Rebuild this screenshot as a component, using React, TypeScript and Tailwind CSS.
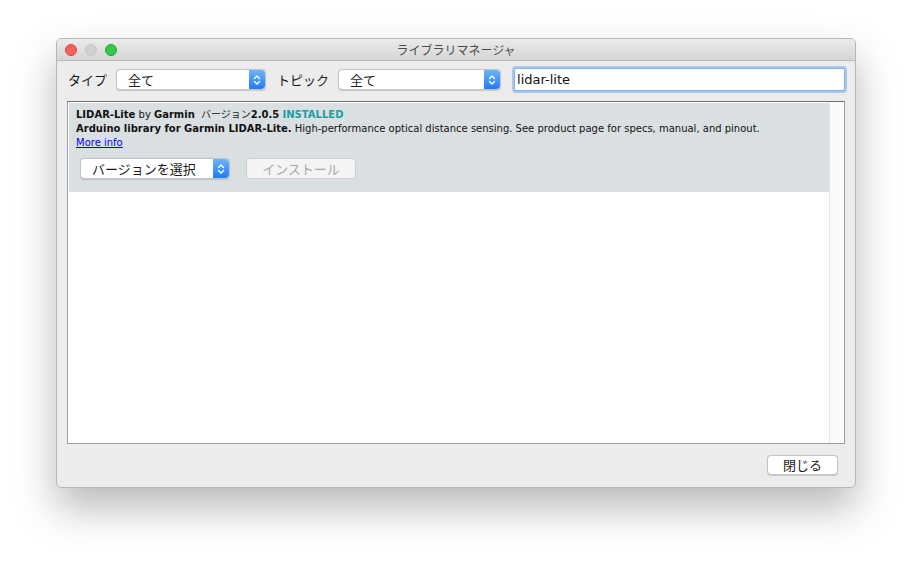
import React from "react";

const jp = "font-['Noto_Sans_CJK_JP','Noto_Sans',sans-serif]";
const ui = "font-['DejaVu_Sans','Noto_Sans_CJK_JP',sans-serif]";

function Stepper() {
  return (
    <div className="flex h-full w-[16px] items-center justify-center rounded-r-[4px] bg-gradient-to-b from-[#6cb3fa] to-[#1a7cf5]">
      <svg width="8" height="12" viewBox="0 0 8 12" fill="none" stroke="white" strokeWidth="1.4" strokeLinecap="round" strokeLinejoin="round">
        <path d="M1.5 4.5 L4 2 L6.5 4.5" />
        <path d="M1.5 7.5 L4 10 L6.5 7.5" />
      </svg>
    </div>
  );
}

function Select({ label, width }: { label: string; width: string }) {
  return (
    <div className={`flex h-[21px] ${width} items-stretch rounded-[4px] border border-[#c4c4c4] bg-white shadow-[0_0.5px_1px_rgba(0,0,0,0.15)]`}>
      <div className={`flex flex-1 items-center pl-[11px] text-[13px] text-[#1a1a1a] ${jp}`}>{label}</div>
      <Stepper />
    </div>
  );
}

export default function App() {
  return (
    <div className="min-h-[562px] w-[912px] bg-white pl-[56px] pt-[38px]">
      <div className="flex h-[450px] w-[800px] flex-col overflow-hidden rounded-[5px] border border-[#b8b8b8] bg-[#ececec] shadow-[0_20px_40px_rgba(0,0,0,0.28)]">
        {/* title bar */}
        <div className="relative flex h-[22px] items-center border-b border-[#b9b9b9] bg-gradient-to-b from-[#ebebeb] to-[#d5d5d5]">
          <div className="flex items-center gap-[8px] pl-[8px]">
            <span className="h-[12px] w-[12px] rounded-full border border-[#e0443e] bg-[#fc605c]" />
            <span className="h-[12px] w-[12px] rounded-full border border-[#c8c8c8] bg-[#d0d0d0]" />
            <span className="h-[12px] w-[12px] rounded-full border border-[#1aab29] bg-[#34c84a]" />
          </div>
          <div className={`absolute inset-0 flex items-center justify-center text-[12px] text-[#4c4c4c] ${jp}`}>
            ライブラリマネージャ
          </div>
        </div>

        {/* toolbar */}
        <div className="flex items-center pl-[11px] pt-[7px]">
          <span className={`text-[13px] text-[#1a1a1a] ${jp}`}>タイプ</span>
          <div className="ml-[9px]">
            <Select label="全て" width="w-[150px]" />
          </div>
          <span className={`ml-[11px] text-[13px] text-[#1a1a1a] ${jp}`}>トピック</span>
          <div className="ml-[9px]">
            <Select label="全て" width="w-[163px]" />
          </div>
          <div className="ml-[13px] flex h-[23px] w-[331px] items-center rounded-[2px] border border-[#7fb1ea] bg-white pl-[2px] shadow-[0_0_0_2px_rgba(120,170,235,0.55)]">
            <span className={`text-[13px] text-[#111] ${ui}`}>lidar-lite</span>
          </div>
        </div>

        {/* list */}
        <div className="mx-[10px] mt-[10px] flex h-[343px] border border-[#9d9d9d] border-t-[#6f6f6f] bg-white">
          <div className="flex flex-1 flex-col pl-[1px] pt-[1px]">
            <div className={`h-[89px] bg-[#dae0e2] pl-[7px] pt-[4px] text-[10px] leading-[14px] text-[#111] ${ui}`}>
              <div>
                <b>LIDAR-Lite</b> by <b>Garmin</b>{"  "}
                <span className={`ml-[3px] text-[10px] text-[#222] ${jp}`}>バージョン</span>
                <b>2.0.5</b> <b className="text-[#17a1a5]">INSTALLED</b>
              </div>
              <div>
                <b>Arduino library for Garmin LIDAR-Lite.</b> High-performance optical distance sensing. See product page for specs, manual, and pinout.
              </div>
              <div className="text-[#0000ee] underline">More info</div>
              <div className="mt-[8px] flex items-center pl-[4px]">
                <Select label="バージョンを選択" width="w-[150px]" />
                <div className={`ml-[16px] flex h-[21px] w-[110px] items-center justify-center rounded-[4px] border border-[#d0d0d0] bg-[#f4f4f4] text-[13px] text-[#a8a8a8] ${jp}`}>
                  インストール
                </div>
              </div>
            </div>
          </div>
          <div className="w-[15px] border-l border-[#e6e6e6] bg-[#fafafa]" />
        </div>

        {/* footer */}
        <div className="flex justify-end pr-[17px] pt-[11px]">
          <div className={`flex h-[20px] w-[71px] items-center justify-center rounded-[4px] border border-[#c4c4c4] bg-white text-[13px] text-[#1a1a1a] shadow-[0_0.5px_1px_rgba(0,0,0,0.15)] ${jp}`}>
            閉じる
          </div>
        </div>
      </div>
    </div>
  );
}
